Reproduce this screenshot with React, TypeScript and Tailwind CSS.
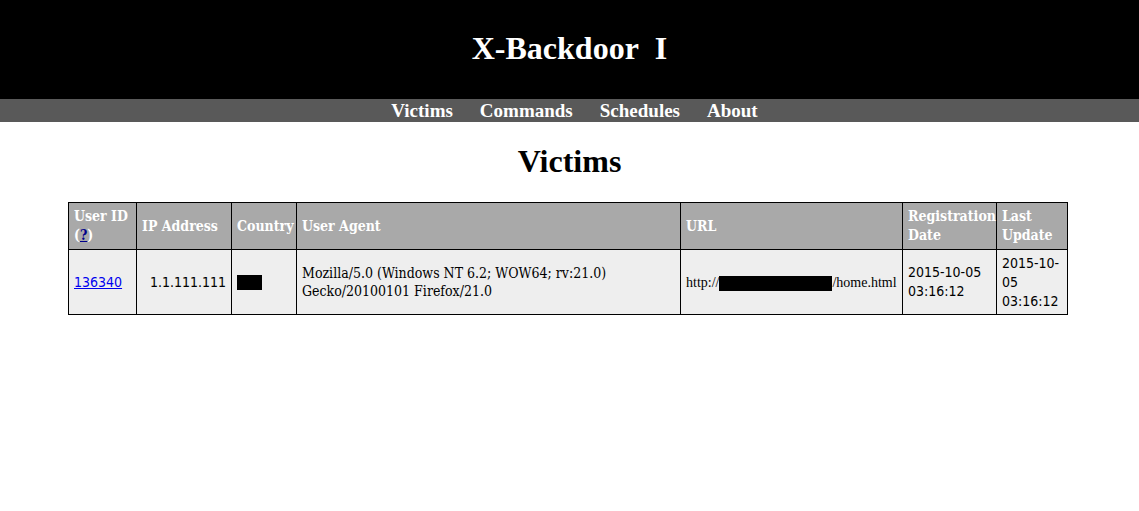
import React from 'react';

const navItems = ['Victims', 'Commands', 'Schedules', 'About'];

const serif = { fontFamily: '"Liberation Serif", "DejaVu Serif", serif' };
const tableSerif = { fontFamily: '"DejaVu Serif", "Liberation Serif", serif' };
const tableSans = { fontFamily: '"DejaVu Sans", "Liberation Sans", sans-serif' };

export default function App() {
    return (
        <div className="min-h-[511px] bg-white text-black" style={serif}>
            {/* title bar */}
            <div className="bg-black h-[99px] flex items-center justify-center pb-[4px]">
                <h1 className="text-white text-[32px] font-bold leading-none">X-Backdoor&nbsp;&nbsp;I</h1>
            </div>

            {/* menu */}
            <nav className="bg-[#595959] h-[23px] flex items-center justify-center gap-[27px] pl-[10px]">
                {navItems.map((item) => (
                    <a key={item} href="#" className="text-white text-[19px] font-bold leading-none">
                        {item}
                    </a>
                ))}
            </nav>

            <h2 className="text-center text-[32px] font-bold leading-none mt-[23px] mb-[25px]">Victims</h2>

            <table className="ml-[68px] w-[1000px] table-fixed border-collapse text-[14px] leading-[19px] font-stretch-condensed" style={tableSerif}>
                <thead>
                    <tr className="bg-[#a9a9a9] text-white text-left h-[47px]">
                        <th className="w-[68px] border border-black px-[5px] font-bold">
                            User ID (<a href="#" className="text-[#00008b] underline">?</a>)
                        </th>
                        <th className="w-[95px] border border-black px-[5px] font-bold">IP Address</th>
                        <th className="w-[65px] border border-black px-[5px] font-bold">Country</th>
                        <th className="w-[384px] border border-black px-[5px] font-bold">User Agent</th>
                        <th className="w-[222px] border border-black px-[5px] font-bold">URL</th>
                        <th className="w-[94px] border border-black px-[5px] font-bold">Registration Date</th>
                        <th className="border border-black px-[5px] font-bold">Last Update</th>
                    </tr>
                </thead>
                <tbody>
                    <tr className="bg-[#eeeeee] h-[65px]">
                        <td className="border border-black px-[5px]" style={tableSans}>
                            <a href="#" className="text-[#0000ee] underline">136340</a>
                        </td>
                        <td className="border border-black px-[5px] text-right" style={tableSans}>
                            1.1.111.111
                        </td>
                        <td className="border border-black px-[5px]">
                            <span className="block w-[25px] h-[15px] bg-black" />
                        </td>
                        <td className="border border-black px-[5px] leading-[18px]">
                            Mozilla/5.0 (Windows NT 6.2; WOW64; rv:21.0) Gecko/20100101 Firefox/21.0
                        </td>
                        <td className="border border-black px-[5px] whitespace-nowrap" style={serif}>
                            http://<span className="inline-block w-[113px] h-[15px] bg-black align-middle" />/home.html
                        </td>
                        <td className="border border-black px-[5px]" style={tableSans}>
                            2015-10-05 03:16:12
                        </td>
                        <td className="border border-black px-[5px]" style={tableSans}>
                            2015-10-05 03:16:12
                        </td>
                    </tr>
                </tbody>
            </table>
        </div>
    );
}
